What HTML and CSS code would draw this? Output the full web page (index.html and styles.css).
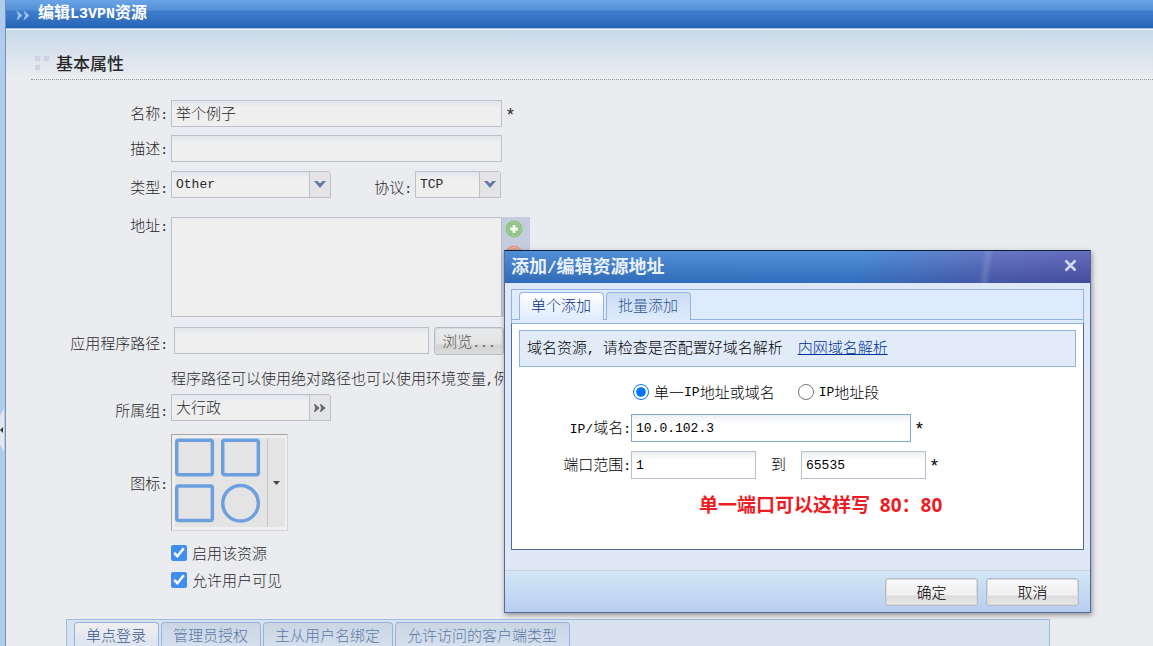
FILE: index.html
```html
<!DOCTYPE html>
<html lang="zh-CN">
<head>
  <meta charset="UTF-8" />
  <meta name="viewport" content="width=device-width, initial-scale=1.0"/>
  <title>编辑L3VPN资源</title>
  <link rel="stylesheet" href="styles.css">
</head>
<body>
  <div class="page">
    <aside class="rail">
      <button type="button" class="rail-toggle" aria-label="收起">
        <svg width="4" height="44" viewBox="0 0 4 44"><path d="M4 0v44L0 36V8z" fill="#e4e8ee"/><path d="M3 19v6L0 22z" fill="#333"/></svg>
      </button>
    </aside>

    <main class="main">
      <header class="page-header">
        <svg class="header-icon" width="14" height="11" viewBox="0 0 14 11">
          <path d="M1 1l5 4.500-5 4.500 1.500-4.500zM8 1l5 4.500-5 4.500 1.500-4.500z" fill="#a9cdf5" stroke="#86b2e8" stroke-width="1"/>
        </svg>
        <h1>编辑<span class="header-latin">L3VPN</span>资源</h1>
      </header>

      <section class="basic">
        <div class="section-title">
          <svg width="14" height="14" viewBox="0 0 14 14" fill="#cdd2e5"><path d="M0 0h5v5H0zM9 0h5v5H9zM0 9h5v5H0z"/></svg>
          <h2>基本属性</h2>
        </div>

        <form class="resource-form">
          <div class="row">
            <label class="caption" for="name">名称<span class="half">:</span></label>
            <input class="text-box wide" type="text" id="name" value="举个例子">
            <span class="star">*</span>
          </div>
          <div class="row">
            <label class="caption" for="desc">描述<span class="half">:</span></label>
            <input class="text-box wide" type="text" id="desc">
          </div>
          <div class="row row-type">
            <label class="caption low" for="type">类型<span class="half">:</span></label>
            <div class="drop drop-type">
              <select id="type"><option>Other</option></select>
              <span class="drop-arrow"><svg width="12" height="8" viewBox="0 0 12 8"><path d="M0 0h3.500L6 2.500 8.500 0H12L6 7z" fill="#6379a3"/></svg></span>
            </div>
            <label class="caption low protocol" for="protocol">协议<span class="half">:</span></label>
            <div class="drop drop-protocol">
              <select id="protocol"><option>TCP</option></select>
              <span class="drop-arrow"><svg width="12" height="8" viewBox="0 0 12 8"><path d="M0 0h3.500L6 2.500 8.500 0H12L6 7z" fill="#6379a3"/></svg></span>
            </div>
          </div>
          <div class="row row-address">
            <label class="caption address" for="address">地址<span class="half">:</span></label>
            <textarea class="address-box" id="address"></textarea>
            <div class="address-tools">
              <button type="button" class="round-btn" aria-label="添加">
                <svg width="18" height="18" viewBox="0 0 18 18"><circle cx="9" cy="9" r="8.500" fill="#86bb7c" stroke="#b4d2ae"/><circle cx="9" cy="9" r="6.500" fill="#91c283" stroke="#a9d19e"/><path d="M9 5v8M5 9h8" stroke="#f4f8f2" stroke-width="3"/></svg>
              </button>
              <button type="button" class="round-btn" aria-label="删除">
                <svg width="18" height="18" viewBox="0 0 18 18"><circle cx="9" cy="9" r="8.500" fill="#dd8f82" stroke="#e8b5ac"/><circle cx="9" cy="9" r="6.500" fill="#e29a8c" stroke="#eeb8ae"/><path d="M5 9h8" stroke="#fff" stroke-width="3"/></svg>
              </button>
            </div>
          </div>
          <div class="row row-path">
            <label class="caption low" for="path">应用程序路径<span class="half">:</span></label>
            <input class="text-box path-box" type="text" id="path">
            <button type="button" class="btn browse">浏览<span class="half">...</span></button>
          </div>
          <p class="hint">程序路径可以使用绝对路径也可以使用环境变量<span class="half">,</span>例</p>
          <div class="row row-group">
            <label class="caption low" for="group">所属组<span class="half">:</span></label>
            <div class="drop drop-group">
              <input type="text" id="group" value="大行政">
              <button type="button" class="drop-arrow" aria-label="选择组">
                <svg width="12" height="8" viewBox="0 0 12 8"><path d="M1 1l3.500 3L1 7l1-3zM7 1l3.500 3L7 7l1-3z" fill="#5f6b76" stroke="#5f6b76" stroke-width="1.500"/></svg>
              </button>
            </div>
          </div>
          <div class="row row-icon">
            <span class="caption" id="iconLabel">图标<span class="half">:</span></span>
            <button type="button" class="icon-picker" aria-labelledby="iconLabel">
              <svg class="icon-preview" width="93" height="89" viewBox="0 0 93 89" fill="none" stroke="#6c9fde" stroke-width="3.500">
                <rect x="1.750" y="1.750" width="36" height="35" rx="2"/>
                <rect x="48.250" y="1.750" width="36" height="35" rx="2"/>
                <rect x="1.750" y="48" width="36" height="35" rx="2"/>
                <circle cx="66.250" cy="65.500" r="18"/>
              </svg>
              <span class="icon-arrow"><svg width="7" height="4" viewBox="0 0 7 4"><path d="M0 0h7L3.500 4z" fill="#444"/></svg></span>
            </button>
          </div>
          <div class="checks">
            <label><input type="checkbox" checked>启用该资源</label>
            <label><input type="checkbox" checked>允许用户可见</label>
          </div>
        </form>

        <nav class="tabs page-tabs">
          <button type="button" class="tab active">单点登录</button>
          <button type="button" class="tab">管理员授权</button>
          <button type="button" class="tab">主从用户名绑定</button>
          <button type="button" class="tab">允许访问的客户端类型</button>
        </nav>
      </section>
    </main>
  </div>

  <!-- Add / edit address dialog -->
  <div class="dialog" role="dialog" aria-labelledby="dialogTitle">
    <div class="dialog-title">
      <h2 id="dialogTitle">添加<span class="title-slash">/</span>编辑资源地址</h2>
      <button type="button" class="dialog-close" aria-label="关闭">
        <svg width="13" height="13" viewBox="0 0 13 13"><path d="M1.500 1.500l10 10M11.500 1.500l-10 10" stroke="#d5dbf2" stroke-width="2.500"/></svg>
      </button>
    </div>
    <div class="dialog-body">
      <div class="tabs dialog-tabs">
        <button type="button" class="tab active">单个添加</button>
        <button type="button" class="tab">批量添加</button>
      </div>
      <form class="dialog-panel">
        <div class="notice">
          <span>域名资源<span class="half">, </span>请检查是否配置好域名解析</span>
          <a href="#">内网域名解析</a>
        </div>
        <div class="modes">
          <label><input type="radio" name="mode" checked>单一<span class="half">IP</span>地址或域名</label>
          <label><input type="radio" name="mode"><span class="half">IP</span>地址段</label>
        </div>
        <div class="row">
          <label class="caption" for="ip"><span class="half">IP/</span>域名<span class="half">:</span></label>
          <input class="text-box ip-box" type="text" id="ip" value="10.0.102.3">
          <span class="star">*</span>
        </div>
        <div class="row">
          <label class="caption" for="portFrom">端口范围<span class="half">:</span></label>
          <input class="text-box port-box" type="text" id="portFrom" value="1">
          <label class="to" for="portTo">到</label>
          <input class="text-box port-box" type="text" id="portTo" value="65535">
          <span class="star">*</span>
        </div>
        <p class="tip">单一端口可以这样写&nbsp; 80：80</p>
      </form>
    </div>
    <div class="dialog-footer">
      <button type="button" class="btn">确定</button>
      <button type="button" class="btn">取消</button>
    </div>
  </div>
</body>
</html>
```
FILE: styles.css
```css
* {
  box-sizing: border-box;
}

body {
  margin: 0;
  font-family: "Noto Sans CJK SC", sans-serif;
  font-size: 15px;
  font-weight: 300;
  line-height: 22px;
  color: #29292b;
  background-color: #ebecf0;
}

h1, h2, p {
  margin: 0;
}

button, input, select, textarea {
  font-family: inherit;
  font-size: inherit;
  font-weight: inherit;
  color: inherit;
  margin: 0;
}

button {
  cursor: pointer;
}

svg {
  display: block;
}

/* latin characters and punctuation take half a CJK cell */
.half {
  font-family: "Liberation Mono", monospace;
  font-size: 13px;
  line-height: 1;
}

.page {
  display: flex;
  height: 100vh;
  overflow: hidden;
}

.rail {
  display: flex;
  align-items: center;
  flex: none;
  width: 6px;
  padding-top: 214px;
  background-color: #b1cbec;
  border-right: 1px solid #7092bf;
}

.rail-toggle {
  padding: 0;
  border: none;
  background: none;
}

.main {
  flex: 1;
  min-width: 0;
}

.page-header {
  display: flex;
  align-items: center;
  gap: 8px;
  height: 30px;
  padding: 0 10px 8px;
  background: linear-gradient(#6aa4e6, #5590d8 10px, #3f7dca 11px, #3b78c8 15px, #2763b4 28px, #a3c0ea 28px, #a3c0ea 29px, #f2f7fb 29px);
}

.header-icon {
  margin-top: 8px;
}

.page-header h1 {
  font-size: 16px;
  line-height: 22px;
  color: #fff;
}

.header-latin {
  font-family: "Liberation Mono", monospace;
  font-size: 15px;
  line-height: 1;
}

.basic {
  padding: 22px 0 0 25px;
  background: linear-gradient(#c7dae9, #ebecf0 48px);
}

.section-title {
  display: flex;
  align-items: center;
  gap: 7px;
  height: 28px;
  padding: 0 0 6px 4px;
  border-bottom: 1px dotted #999;
}

.section-title h2 {
  font-size: 17px;
  font-weight: 500;
}

/* Form */
.row {
  display: flex;
  align-items: flex-start;
  gap: 3px;
}

.resource-form {
  padding-top: 20px;
}

.resource-form .row {
  margin-bottom: 8px;
}

.caption {
  flex: none;
  width: 137px;
  line-height: 26px;
  text-align: right;
}

.low {
  padding-top: 3px;
  margin-bottom: -3px;
}

.text-box {
  height: 27px;
  padding: 0 4px 2px;
  border: 1px solid #bcbfcc;
  background: linear-gradient(#e2e5ea, #efefef 7px);
}

.wide {
  width: 331px;
}

.star {
  padding-top: 3px;
  margin-bottom: -3px;
  font-family: "Liberation Mono", monospace;
  font-size: 18px;
  line-height: 26px;
}

.resource-form .row-type {
  margin-top: 9px;
  margin-bottom: 19px;
}

.row .protocol {
  width: 78px;
}

.drop {
  display: grid;
  grid-template-columns: 1fr 21px;
  height: 27px;
  border: 1px solid #bcbfcc;
  border-top-right-radius: 3px;
  background: linear-gradient(#e2e5ea, #efefef 7px);
}

.drop select, .drop input {
  grid-area: 1 / 1 / 2 / 3;
  width: 100%;
  padding: 0 4px 2px;
  border: none;
  background: none;
  appearance: none;
}

.drop select {
  padding-bottom: 0;
  font-family: "Liberation Mono", monospace;
  font-size: 13px;
}

.drop-arrow {
  grid-area: 1 / 2;
  display: flex;
  align-items: center;
  justify-content: center;
  padding: 0;
  border: none;
  border-left: 1px solid #bcbfcc;
  background-color: #e4e4e6;
  pointer-events: none;
}

.drop-type, .drop-group {
  width: 160px;
}

.drop-protocol {
  width: 86px;
}

.resource-form .row-address {
  gap: 0;
  margin-bottom: 10px;
}

.address {
  margin-right: 3px;
  line-height: 16px;
}

.address-box {
  width: 331px;
  height: 100px;
  border: 1px solid #bcbfcc;
  background-color: #efefef;
  resize: none;
}

.address-tools {
  display: flex;
  flex-direction: column;
  gap: 7px;
  width: 28px;
  height: 100px;
  padding: 3px;
  background-color: #c3cddf;
}

.round-btn {
  width: 18px;
  height: 18px;
  padding: 0;
  border: none;
  background: none;
}

.path-box {
  width: 255px;
  margin-left: 3px;
}

.btn {
  width: 93px;
  height: 28px;
  padding: 0 0 2px;
  border: 1px solid #b5bcc8;
  border-radius: 3px;
  box-shadow: inset 0 0 0 1px #d9dadc;
  background: linear-gradient(#f8f9fb, #f0f0f0 16px, #dcdcdc 17px, #e6e6e6);
}

.browse {
  width: 70px;
  margin-left: 2px;
  color: #555;
  background: linear-gradient(#e8eaee, #e4e4e4 16px, #d2d2d2 17px, #dcdcdc);
}

.hint {
  padding: 3px 0 4px 140px;
  line-height: 24px;
  white-space: nowrap;
}

.resource-form .row-group {
  margin-bottom: 13px;
}

.row-icon {
  align-items: center;
}

.icon-picker {
  display: flex;
  padding: 3px 2px 3px 3px;
  border: 1px solid #a5a5a5;
  border-right-color: #d5d5d5;
  border-bottom-color: #d5d5d5;
  background-color: #efefef;
}

.icon-preview {
  border-right: 1px solid #c5c5c5;
  background-color: #e4e4e4;
}

.icon-arrow {
  display: flex;
  align-items: center;
  justify-content: center;
  width: 17px;
  background-color: #e4e4e4;
}

.checks {
  display: flex;
  flex-direction: column;
  align-items: flex-start;
  gap: 5px;
  padding: 3px 0 28px 140px;
}

.checks label, .modes label {
  display: flex;
  align-items: center;
}

.checks input, .modes input {
  width: 16px;
  height: 16px;
  margin-right: 5px;
}

.checks input {
  accent-color: #3f8ef0;
}

/* Tabs */
.tabs {
  display: flex;
  align-items: flex-start;
  gap: 2px;
  padding: 2px 7px 0;
  border: 1px solid #9fbbe0;
  border-bottom: none;
}

.tab {
  height: 28px;
  padding: 0 12px 5px 11px;
  border: 1px solid #94b4de;
  border-bottom: none;
  border-radius: 4px 4px 0 0;
  white-space: nowrap;
}

.page-tabs {
  height: 60px;
  margin: 0 103px 0 35px;
  background-color: #d8e2ef;
}

.page-tabs .tab {
  color: #5c78a8;
  background: linear-gradient(#cbd6e5, #d6e0ee);
}

.page-tabs .active {
  color: #3a5890;
  background: linear-gradient(#efeff0, #d8e2ef);
}

/* Dialog */
.dialog {
  position: absolute;
  left: 504px;
  top: 250px;
  width: 587px;
  color: #000;
  background-color: #dfe8f6;
  border: 1px solid #526c96;
  border-top-color: #0c2340;
  box-shadow: 1px 2px 5px rgba(0, 0, 0, 0.4);
}

.dialog-title {
  display: flex;
  align-items: center;
  justify-content: space-between;
  height: 32px;
  padding: 0 13px 4px 6px;
  background:
    linear-gradient(98deg, transparent 81%, rgba(255, 255, 255, 0.14) 82%, transparent 83%),
    linear-gradient(rgba(255, 255, 255, 0.12), rgba(0, 0, 40, 0.16)),
    linear-gradient(90deg, #3a7fd2, #3b82d6 60%, #4a70c4 75%, #5163bb 85%, #505ab2);
}

.dialog-title h2 {
  font-size: 18px;
  line-height: 24px;
  color: #e9f1fc;
}

.title-slash {
  font-family: "Liberation Mono", monospace;
  font-size: 16px;
  line-height: 1;
}

.dialog-close {
  padding: 0;
  border: none;
  background: none;
}

.dialog-body {
  padding: 6px 6px 20px;
}

.dialog-tabs {
  height: 34px;
  border-color: #8fb2e6;
  background: linear-gradient(#deebfd 29px, #8fb2e6 29px, #8fb2e6 30px, #deebfd 30px);
}

.dialog-tabs .tab {
  color: #2f5494;
  background: linear-gradient(#cbdcf3, #dfebfd);
}

.dialog-tabs .active {
  color: #0a3480;
  background: linear-gradient(#fff, #deebfd);
}

.dialog-panel {
  min-height: 227px;
  padding: 6px 7px;
  border: 1px solid #526c96;
  border-top-color: #8fb2e6;
  background-color: #fff;
}

.notice {
  display: flex;
  gap: 15px;
  padding: 5px 7px 8px;
  border: 1px solid #8fb2e0;
  background-color: #e2ecf9;
}

.notice a {
  color: #003399;
}

.modes {
  display: flex;
  gap: 23px;
  padding: 14px 0 11px 114px;
}

.modes input {
  accent-color: #0075ff;
}

.dialog-panel .row {
  gap: 0;
  margin-bottom: 9px;
}

.dialog-panel .caption {
  width: 112px;
}

.dialog-panel .text-box {
  height: 28px;
  padding-bottom: 0;
  font-family: "Liberation Mono", monospace;
  font-size: 13px;
  background: linear-gradient(#eceff3, #fff 9px);
}

.dialog-panel .star {
  margin-left: 3px;
}

.ip-box {
  width: 280px;
}

.dialog-panel .ip-box {
  border-color: #7faad8;
}

.port-box {
  width: 125px;
}

.to {
  padding: 0 15px;
  line-height: 26px;
}

.tip {
  padding: 3px 0 0 180px;
  font-family: "Open Sans", "Noto Sans CJK SC", sans-serif;
  font-size: 19px;
  font-weight: bold;
  line-height: 28px;
  color: #ed1c24;
}

.dialog-footer {
  display: flex;
  justify-content: flex-end;
  gap: 8px;
  padding: 7px 11px 6px;
  border-top: 1px solid #c4d3e4;
  background: linear-gradient(#d3e7f6, #b8cdf0);
}
```
